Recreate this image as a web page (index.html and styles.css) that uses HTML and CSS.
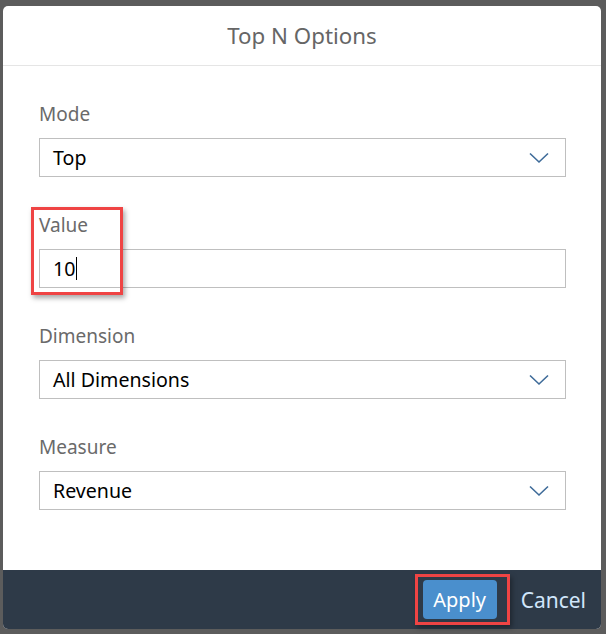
FILE: index.html
```html
<!DOCTYPE html>
<html>
<head>
<meta charset="utf-8">
<link rel="stylesheet" href="styles.css">
</head>
<body>
<div class="dialog">
  <div class="header">Top N Options</div>
  <div class="content">
    <div class="group">
      <div class="label">Mode</div>
      <div class="field select"><span>Top</span>
        <svg class="chev" width="20" height="12" viewBox="0 0 20 12"><path d="M1 1.5 L10 10 L19 1.5" fill="none" stroke="#3e6b99" stroke-width="1.6"/></svg>
      </div>
    </div>
    <div class="group">
      <div class="label">Value</div>
      <div class="field"><span>10</span><span class="cursor"></span></div>
    </div>
    <div class="group">
      <div class="label">Dimension</div>
      <div class="field select"><span>All Dimensions</span>
        <svg class="chev" width="20" height="12" viewBox="0 0 20 12"><path d="M1 1.5 L10 10 L19 1.5" fill="none" stroke="#3e6b99" stroke-width="1.6"/></svg>
      </div>
    </div>
    <div class="group">
      <div class="label">Measure</div>
      <div class="field select"><span>Revenue</span>
        <svg class="chev" width="20" height="12" viewBox="0 0 20 12"><path d="M1 1.5 L10 10 L19 1.5" fill="none" stroke="#3e6b99" stroke-width="1.6"/></svg>
      </div>
    </div>
  </div>
  <div class="footer">
    <button class="btn apply">Apply</button>
    <button class="btn cancel">Cancel</button>
  </div>
  <div class="mark mark-value"></div>
  <div class="mark mark-apply"></div>
</div>
</body>
</html>
```
FILE: styles.css
```css
html, body {
  margin: 0;
  padding: 0;
  background: #5c5c5c;
  height: 634px;
  overflow: hidden;
}
body {
  font-family: "Noto Sans", "Open Sans", sans-serif;
}
.dialog {
  position: relative;
  margin: 6px 0 0 3px;
  width: 598px;
  height: 623px;
  background: #ffffff;
  border-radius: 5px;
  display: flex;
  flex-direction: column;
}
.header {
  height: 59px;
  border-bottom: 1px solid #e5e5e5;
  display: flex;
  align-items: center;
  justify-content: center;
  font-size: 22.3px;
  color: #666666;
}
.content {
  flex: 1;
  padding: 37px 35px 0 36px;
  display: flex;
  flex-direction: column;
  gap: 37px;
}
.label {
  font-size: 19px;
  line-height: 22px;
  color: #6a6a6a;
  margin-bottom: 13px;
}
.field {
  height: 37px;
  border: 1px solid #bfbfbf;
  display: flex;
  align-items: center;
  padding: 0 16px 0 13px;
  font-size: 19.6px;
  color: #000000;
}
.select {
  justify-content: space-between;
}
.cursor {
  width: 1px;
  height: 23px;
  background: #000;
  margin-left: 1px;
}
.chev {
  display: block;
}
.footer {
  height: 59px;
  background: #2e3a48;
  border-radius: 0 0 5px 5px;
  display: flex;
  align-items: center;
  justify-content: flex-end;
  padding-right: 15px;
  gap: 24px;
}
.btn {
  font-family: "Noto Sans", "Open Sans", sans-serif;
  font-size: 20px;
  border: none;
  cursor: pointer;
  margin: 0;
}
.apply {
  height: 39px;
  width: 74px;
  background: #4a8fcd;
  color: #ffffff;
  border-radius: 4px;
  padding: 0;
}
.cancel {
  background: transparent;
  color: #d1e6fb;
  padding: 0;
  font-size: 21px;
}
.mark {
  position: absolute;
  border: 3px solid #ef4444;
  box-shadow: 2px 3px 5px rgba(0,0,0,0.35);
  box-sizing: border-box;
}
.mark-value {
  left: 28px;
  top: 201px;
  width: 92px;
  height: 88px;
}
.mark-apply {
  left: 412px;
  top: 568px;
  width: 95px;
  height: 51px;
}
```
